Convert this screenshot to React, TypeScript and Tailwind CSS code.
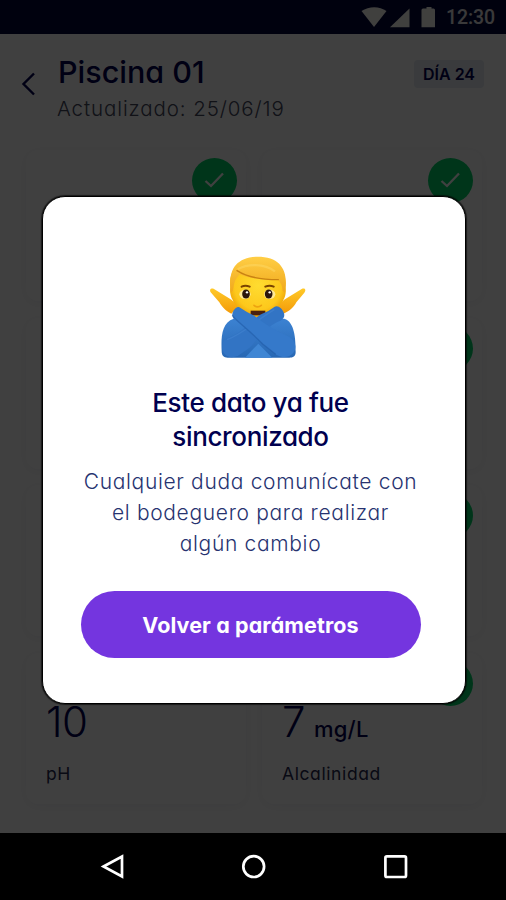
type Reading = {
  id: string;
  value?: string;
  unit?: string;
  label?: string;
  synced: boolean;
};

const READINGS: Reading[] = [
  { id: "a1", synced: true },
  { id: "a2", synced: true },
  { id: "b1", synced: true },
  { id: "b2", synced: true },
  { id: "c1", synced: true },
  { id: "c2", synced: true },
  { id: "ph", value: "10", label: "pH", synced: false },
  { id: "alk", value: "7", unit: "mg/L", label: "Alcalinidad", synced: true },
];

function StatusBar() {
  return (
    <div className="flex h-[34px] items-center justify-end bg-[#000638] pr-[11px] text-[#fffdf8]">
      <svg width="78" height="34" viewBox="0 0 78 34" fill="currentColor">
        <path d="M0.500 11C8 5.900 18.500 5.900 25.500 11L13 27Z" />
        <path d="M48.500 8.500V27.300H29Z" />
        <path d="M64 8.500H65.500V7H70.500V8.500H72.500Q74 8.500 74 10V27.300H60.500V10Q60.500 8.500 62 8.500Z" />
      </svg>
      <span className="mt-0.5 ml-[7px] w-[49px] font-[Roboto,sans-serif] text-[19.500px] font-medium tracking-[-0.1px] opacity-90">12:30</span>
    </div>
  );
}

function Header() {
  return (
    <header className="flex h-[116px] items-start pl-[21px] pt-[22px] text-[#00004f]">
      <svg className="mt-4 shrink-0" width="15" height="24" viewBox="0 0 15 24" fill="none" stroke="currentColor" strokeWidth="2.4">
        <path d="M13 1.500L2.500 12L13 22.500" />
      </svg>
      <div className="ml-[21px] flex-1 whitespace-nowrap">
        <h1 className="ml-px text-[30.500px] leading-8 font-medium">Piscina 01</h1>
        <p className="mt-[9px] text-[20.500px] leading-6 font-[350] tracking-[0.9px] text-[#44485e]">Actualizado: 25/06/19</p>
      </div>
      <span className="mt-1 mr-[22px] flex h-7 w-[70px] items-center justify-center rounded-[4px] bg-[#e6eaf2] text-base font-semibold">
        DÍA 24
      </span>
    </header>
  );
}

function ReadingCard({ reading }: { reading: Reading }) {
  return (
    <article className="relative h-[151px] rounded-xl bg-white pt-12 pl-[20px] text-[#00004f] shadow-[0_2px_12px_rgba(0,0,60,0.06)]">
      {reading.synced && (
        <span className="absolute top-[8px] right-[9px] flex size-[45px] items-center justify-center rounded-full bg-[#00d468]">
          <svg width="21" height="17" viewBox="0 0 21 17" fill="none" stroke="#fff" strokeWidth="2.300">
            <path d="M1.500 9L7 14L19 1.500" />
          </svg>
        </span>
      )}
      {reading.value && (
        <p className="flex h-[42px] items-baseline gap-[9px] leading-[42px]">
          <span className="text-[42px] font-light tracking-[-0.5px]">{reading.value}</span>
          {reading.unit && <span className="text-[22px] font-medium tracking-[0.2px]">{reading.unit}</span>}
        </p>
      )}
      {reading.label && <p className="mt-[19px] text-[17.500px] leading-6 tracking-[0.6px] text-[#262850]">{reading.label}</p>}
    </article>
  );
}

function NoGestureEmoji() {
  return (
    <svg className="ml-[14px] shrink-0" width="125" height="130" viewBox="0 0 375 390">
      <defs>
        <linearGradient id="hair" x1="0" y1="0" x2="0" y2="1">
          <stop offset="0" stopColor="#ffce45" />
          <stop offset="1" stopColor="#f0a81c" />
        </linearGradient>
        <radialGradient id="face" cx="0.5" cy="0.45" r="0.6">
          <stop offset="0" stopColor="#ffdc30" />
          <stop offset="0.7" stopColor="#fdc81c" />
          <stop offset="1" stopColor="#e99700" />
        </radialGradient>
        <linearGradient id="hand" x1="0" y1="0" x2="0" y2="1">
          <stop offset="0" stopColor="#ffc928" />
          <stop offset="1" stopColor="#f39a08" />
        </linearGradient>
        <linearGradient id="sleeve" x1="0" y1="0" x2="0" y2="1">
          <stop offset="0" stopColor="#3c82d2" />
          <stop offset="1" stopColor="#2868b4" />
        </linearGradient>
      </defs>
      {/* torso */}
      <path d="M80 334C78 290 80 248 116 236L268 236C299 246 302 294 302 336C302 349 294 353 283 353H98C86 353 80 347 80 334Z" fill="url(#sleeve)" />
      <path d="M150 353L190 311L232 353Z" fill="#3f86d4" />
      {/* head */}
      <path d="M106 142C101 88 130 60 189 58C247 58 277 88 271 142C274 153 272 169 265 180C257 210 230 231 189 232C148 231 121 210 113 180C106 169 104 153 106 142Z" fill="url(#face)" />
      <path d="M107 158C99 92 119 53 187 50C260 50 281 94 270 158L263 152C262 138 258 130 250 120C222 120 170 119 134 103C128 110 124 115 120 123C116 133 116 143 113 153Z" fill="url(#hair)" />
      <path d="M126 92C154 110 196 119 250 119" fill="none" stroke="#c98212" strokeWidth="4" strokeLinecap="round" />
      <path d="M128 88C158 70 207 70 240 94" fill="none" stroke="#ffe378" strokeWidth="7" opacity="0.35" />
      <path d="M140 140Q151 134 164 140M211 140Q224 134 236 140" fill="none" stroke="#7a4300" strokeWidth="6" strokeLinecap="round" />
      <ellipse cx="150" cy="163" rx="17" ry="14" fill="#ffe995" />
      <ellipse cx="224" cy="163" rx="17" ry="14" fill="#ffe995" />
      <ellipse cx="153" cy="162" rx="11.500" ry="13.500" fill="#2c160c" />
      <ellipse cx="221" cy="162" rx="11.500" ry="13.500" fill="#2c160c" />
      <circle cx="156" cy="157" r="3.500" fill="#fff" />
      <circle cx="224" cy="157" r="3.500" fill="#fff" />
      <path d="M177 196Q188 205 199 196" fill="none" stroke="#eda310" strokeWidth="5" strokeLinecap="round" />
      <path d="M167 212H211V226H167Z" fill="#49200e" />
      {/* hands */}
      <path d="M109 221C91 212 81 201 73 187L47 157C42 148 49 143 57 147L101 174Q119 183 126 203Z" fill="url(#hand)" />
      <path d="M265 221C286 212 297 201 304 187L328 158C335 149 329 143 320 147L276 174Q258 184 250 202Z" fill="url(#hand)" />
      {/* crossed sleeves */}
      <path d="M238 201C248 194 262 205 267 220C270 230 265 237 256 242C210 261 191 294 164 323L128 348C99 359 79 342 82 316C83 302 92 296 105 291C150 272 172 236 200 222Q222 214 238 201Z" fill="#3274c4" />
      <path d="M96 299C146 281 183 241 238 209" fill="none" stroke="#4a8cd8" strokeWidth="4" opacity="0.4" />
      <path d="M133 202C125 197 113 211 112 223C111 232 116 238 125 244C151 264 178 288 203 312L244 344C274 361 302 344 301 319C300 302 287 292 273 286C232 268 204 246 178 227Q156 218 133 202Z" fill="#3579ca" />
      <path d="M112 225C120 241 150 258 203 312L242 343" fill="none" stroke="#225ca6" strokeWidth="4" opacity="0.6" />
    </svg>
  );
}

function SyncedDialog() {
  return (
    <div role="dialog" className="flex h-[508px] w-[424px] flex-col items-center rounded-[23px] border border-black bg-white pt-[43px] pr-[6px] text-center whitespace-nowrap text-[#00004f] shadow-[0_0_1px_1px_rgba(0,0,0,0.6)]">
      <NoGestureEmoji />
      <h2 className="mt-[16px] text-[26px] leading-[34px] font-medium tracking-[-0.35px]">
        Este dato ya fue
        <br />
        sincronizado
      </h2>
      <p className="mt-[12px] text-[21px] leading-[31.200px] font-[350] tracking-[0.67px] text-[#273370]">
        Cualquier duda comunícate con
        <br />
        el bodeguero para realizar
        <br />
        algún cambio
      </p>
      <button className="mt-[31px] h-[67px] w-[340px] rounded-full bg-[#7435df] pt-0.5 text-[21.500px] font-bold tracking-[0.1px] text-white">
        Volver a parámetros
      </button>
    </div>
  );
}

function NavigationBar() {
  return (
    <nav className="flex h-[67px] items-center bg-black pl-[100px]">
      <svg width="26" height="28" viewBox="0 0 26 28" fill="none" stroke="#fff" strokeWidth="2.700">
        <path d="M3.500 13.500L22 3.500V23.500Z" />
      </svg>
      <svg className="ml-[115px]" width="26" height="28" viewBox="0 0 26 28" fill="none" stroke="#fff" strokeWidth="2.700">
        <circle cx="12.700" cy="13.600" r="10.400" />
      </svg>
      <svg className="ml-[116px]" width="26" height="28" viewBox="0 0 26 28" fill="none" stroke="#fff" strokeWidth="2.700">
        <rect x="2.400" y="3.400" width="20.600" height="20.600" rx="1.500" />
      </svg>
    </nav>
  );
}

export default function App() {
  return (
    <div className="relative flex h-[900px] w-[506px] flex-col overflow-hidden bg-white font-[Inter,sans-serif] [font-feature-settings:'cv11']">
      <div className="relative h-[833px]">
        <StatusBar />
        <Header />
        <main className="grid grid-cols-2 gap-x-4 gap-y-[16.500px] pr-[24px] pl-[26px]">
          {READINGS.map((reading) => (
            <ReadingCard key={reading.id} reading={reading} />
          ))}
        </main>
        <div className="absolute inset-0 bg-black/75" />
      </div>
      <NavigationBar />
      <div className="absolute inset-0 flex items-center justify-center pl-[1px]">
        <SyncedDialog />
      </div>
    </div>
  );
}
